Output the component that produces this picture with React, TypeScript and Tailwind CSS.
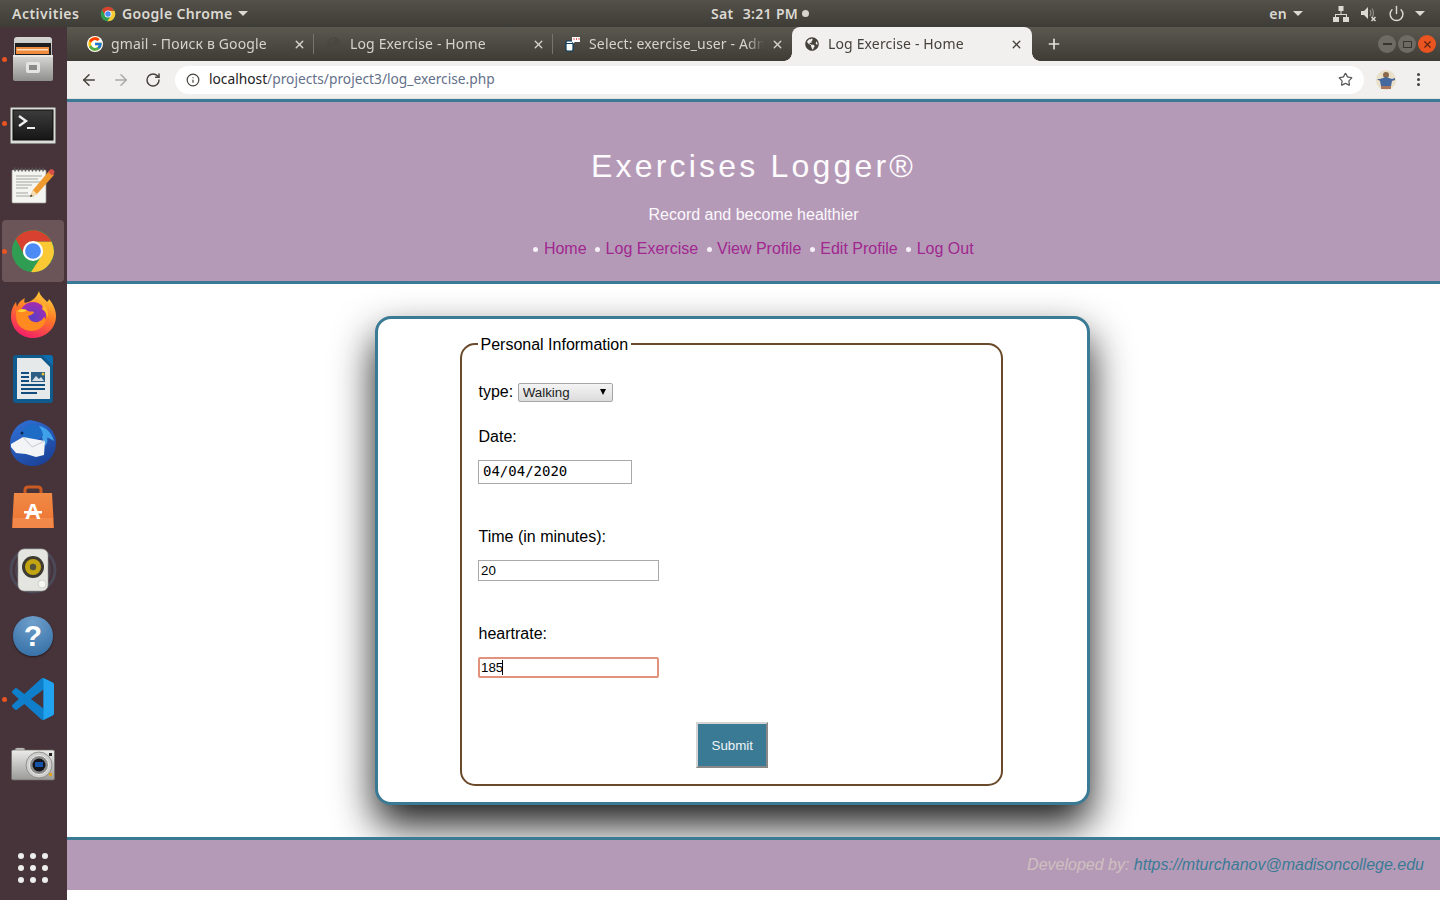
import React from 'react';
import { ArrowLeft, ArrowRight, Info, Plus, Power, RotateCw, Star, X } from 'lucide-react';
import { FcGoogle } from 'react-icons/fc';
import { FaGlobeAmericas } from 'react-icons/fa';

const ChromeLogo = ({ size }: { size: number }) => (
  <svg width={size} height={size} viewBox="0 0 48 48">
    <circle cx="24" cy="24" r="22" fill="#2f9e53" />
    <path d="M24 14H43.2A22 22 0 0 1 22 46L33 29Z" fill="#fbc934" />
    <path d="M43.2 14A22 22 0 0 0 6 11.5L15.2 28.5L24 14Z" fill="#d8412f" />
    <circle cx="24" cy="24" r="10.5" fill="#fff" />
    <circle cx="24" cy="24" r="8.2" fill="#4c8bf5" />
  </svg>
);

const FileCabinet = () => (
  <svg width="44" height="46" viewBox="0 0 44 46">
    <defs>
      <linearGradient id="cab" x1="0" y1="0" x2="0" y2="1">
        <stop offset="0" stopColor="#d6d6d4" />
        <stop offset="1" stopColor="#8f8f8d" />
      </linearGradient>
    </defs>
    <path d="M3 4q0-3 3-3h32q3 0 3 3v38q0 2-2 2H5q-2 0-2-2Z" fill="url(#cab)" />
    <rect x="4" y="7" width="36" height="12" fill="#1f1f1f" />
    <rect x="5" y="11" width="33" height="7" fill="#ef8b3c" />
    <rect x="6" y="13" width="31" height="1.5" fill="#fbe0bf" />
    <path d="M2 20H42V43Q42 45 40 45H4Q2 45 2 43Z" fill="url(#cab)" />
    <rect x="2" y="19" width="40" height="2" fill="#e9e9e7" />
    <rect x="15" y="26" width="14" height="11" rx="2" fill="#e4e4e2" />
    <rect x="18" y="29" width="8" height="5" fill="#8a8a88" />
  </svg>
);

const Terminal = () => (
  <svg className="mt-[4px]" width="46" height="37" viewBox="0 0 46 37">
    <defs>
      <linearGradient id="term" x1="0" y1="0" x2="0" y2="1">
        <stop offset="0" stopColor="#3c3c3c" />
        <stop offset="1" stopColor="#161616" />
      </linearGradient>
    </defs>
    <rect x="0.5" y="0.5" width="45" height="36" rx="1" fill="#dcdcda" stroke="#8a8a88" />
    <rect x="3" y="3" width="40" height="30" fill="url(#term)" stroke="#0d0d0d" />
    <path d="M9 9l7 5-7 5" fill="none" stroke="#eee" strokeWidth="2.4" />
    <rect x="17" y="20" width="8" height="2" fill="#eee" />
  </svg>
);

const TextEditor = () => (
  <svg className="-mt-[4px]" width="46" height="38" viewBox="0 0 46 38">
    <rect x="2" y="4" width="34" height="33" rx="1" fill="#f4f4f0" stroke="#9a9a96" strokeWidth="0.7" />
    <path d="M5 1.5v4M8.5 1.5v4M12 1.5v4M15.5 1.5v4M19 1.5v4M22.5 1.5v4M26 1.5v4M29.5 1.5v4M33 1.5v4" stroke="#555" strokeWidth="1.4" />
    <path d="M6 10h26M6 13h22M6 16h24M6 19h16M6 22h12M6 27h12M6 30h18" stroke="#a5a5a0" strokeWidth="1" />
    <path d="M20 31l3-7L39 5l5 4-17 19Z" fill="#ef9a2e" />
    <path d="M38 6l2-2.5q2-1 4 1 1 2 0 3l-2 2Z" fill="#d8504a" />
    <path d="M20 31l3-7 4 4Z" fill="#f4dcb4" />
    <path d="M20 31l1-2.5 1.5 1.5Z" fill="#222" />
  </svg>
);

const Firefox = () => (
  <svg className="-mt-[3px]" width="46" height="48" viewBox="0 0 46 48">
    <defs>
      <linearGradient id="ff" x1="0.7" y1="0" x2="0.3" y2="1">
        <stop offset="0" stopColor="#ffd23a" />
        <stop offset="0.45" stopColor="#ff7a26" />
        <stop offset="1" stopColor="#f21b6b" />
      </linearGradient>
      <radialGradient id="ffc" cx="0.5" cy="0.6" r="0.6">
        <stop offset="0" stopColor="#5b3fc4" />
        <stop offset="1" stopColor="#a62bb0" />
      </radialGradient>
    </defs>
    <path d="M29 1c1 5 4 6 8 11 1-1 2-2 2-3 5 6 7 12 7 17 0 12-10 22-23 22S1 38 1 26c0-6 2-10 5-14l1 5c1-4 4-7 8-9-1 2-1 4 0 5 4-1 11-3 14-12Z" fill="url(#ff)" />
    <circle cx="23" cy="25" r="13" fill="url(#ffc)" />
    <path d="M6 21c4-3 9-2 12 0 3 1 5 0 6 1-1 3-4 3-6 4 1 4 5 7 10 6 3-1 5-3 6-5 3 2 2 9-7 13-8 3-17-1-20-8-1-4-1-8-1-11Z" fill="#ff8a1f" />
    <path d="M7 21c3-2 6-2 10-1-2 2-5 3-10 1Z" fill="#ffd23a" />
    <path d="M32 12c4 4 7 9 6 16-1-4-3-7-6-9 1-2 1-5 0-7Z" fill="#ffb52e" />
  </svg>
);

const Writer = () => (
  <svg width="40" height="48" viewBox="0 0 40 48">
    <path d="M3 0H29L40 11V45Q40 48 37 48H3Q0 48 0 45V3Q0 0 3 0Z" fill="#0f5b8d" />
    <path d="M29 0H37Q40 0 40 3V11Z" fill="#0a6fb0" />
    <path d="M4 3H28L37 12V44H4Z" fill="#e6e9ea" />
    <path d="M8 18h8M8 22h8M8 26h8M8 30h24M8 34h24M8 38h16" stroke="#134f7e" strokeWidth="2" />
    <rect x="18" y="17" width="14" height="10" fill="#2d5f85" />
    <path d="M19 26l4-5 3 3 2-2 3 4Z" fill="#d9dfe3" />
    <circle cx="30" cy="19" r="1.5" fill="#e8c13c" />
  </svg>
);

const Thunderbird = () => (
  <svg width="48" height="48" viewBox="0 0 48 48">
    <defs>
      <linearGradient id="tb" x1="0.2" y1="0" x2="0.8" y2="1">
        <stop offset="0" stopColor="#2f6fd4" />
        <stop offset="1" stopColor="#1a3f95" />
      </linearGradient>
    </defs>
    <path d="M21 1C9 3 1 13 1 25c0 13 10 22 23 22s23-10 23-23c0-8-4-14-9-17-4-3-11-5-17-6Z" fill="url(#tb)" />
    <path d="M30 7c7 1 13 7 15 15-3-1-5-4-7-3 1 3 0 6-2 8-2-5-4-12-6-20Z" fill="#3fa1e8" />
    <path d="M15 10c3-4 9-6 14-3 3 2 5 6 5 10l-12 8-9-9c-1-2 0-4 2-6Z" fill="#1f6cc6" />
    <path d="M2 25L14 18l22 4-1 14-8 2-10-3-10-1-5-6Z" fill="#f3f4f6" />
    <path d="M14 18l9 10 13-6" fill="none" stroke="#c4c8d0" strokeWidth="1" />
    <circle cx="13" cy="14" r="1.5" fill="#0d2a55" />
  </svg>
);

const SoftwareBag = () => (
  <svg width="44" height="44" viewBox="0 0 44 44">
    <defs>
      <linearGradient id="bag" x1="0" y1="0" x2="0" y2="1">
        <stop offset="0" stopColor="#f08a44" />
        <stop offset="1" stopColor="#ee7332" />
      </linearGradient>
    </defs>
    <path d="M14 10V5q0-3 3-3h10q3 0 3 3v5" fill="none" stroke="#c95a22" strokeWidth="3" />
    <path d="M3 8H41L43 43H1Z" fill="url(#bag)" />
    <rect x="2" y="33" width="40" height="10" fill="#f59a60" opacity="0.5" />
    <text x="22" y="34" textAnchor="middle" fontFamily="Liberation Sans, sans-serif" fontWeight="700" fontSize="22" fill="#fff">A</text>
    <rect x="13" y="26" width="18" height="2.5" fill="#fff" />
  </svg>
);

const Speaker = () => (
  <svg width="50" height="46" viewBox="0 0 50 46">
    <circle cx="25" cy="22" r="22" fill="none" stroke="#54708f" strokeOpacity="0.35" strokeWidth="3" />
    <circle cx="25" cy="22" r="17" fill="none" stroke="#54708f" strokeOpacity="0.3" strokeWidth="2" />
    <rect x="10" y="1" width="30" height="42" rx="6" fill="#e4e5e0" stroke="#9a9a96" strokeWidth="0.6" />
    <circle cx="25" cy="19" r="11" fill="#3d3a30" />
    <circle cx="25" cy="19" r="8" fill="#c2a511" />
    <circle cx="25" cy="19" r="3.2" fill="#55523c" />
    <circle cx="34" cy="36" r="4" fill="#f6f6f3" stroke="#c4c4bf" strokeWidth="0.7" />
  </svg>
);

const HelpIcon = () => (
  <div className="mt-[2px] flex h-[40px] w-[40px] items-center justify-center rounded-full bg-[radial-gradient(circle_at_50%_15%,#6f9fcb,#2f6ba3)] text-[30px] font-bold leading-none text-white shadow-[0_1px_2px_rgba(0,0,0,0.5)] font-['Liberation_Sans',sans-serif]">
    ?
  </div>
);

const VSCode = () => (
  <svg width="42" height="42" viewBox="0 0 24 24">
    <path d="M23.15 2.587L18.21.21a1.494 1.494 0 0 0-1.705.29l-9.46 8.63-4.12-3.128a.999.999 0 0 0-1.276.057L.327 7.261A1 1 0 0 0 .326 8.74L3.899 12 .326 15.26a1 1 0 0 0 .001 1.479L1.65 17.94a.999.999 0 0 0 1.276.057l4.12-3.128 9.46 8.63a1.492 1.492 0 0 0 1.704.29l4.942-2.377A1.5 1.5 0 0 0 24 20.06V3.939a1.5 1.5 0 0 0-.85-1.352zm-5.146 14.861L10.826 12l7.178-5.448v10.896z" fill="#0f7fcc" />
    <path d="M17 .3c.4-.2.9-.3 1.2-.1l4.95 2.39A1.5 1.5 0 0 1 24 3.94v16.12a1.5 1.5 0 0 1-.85 1.35l-4.95 2.38c-.4.2-.9.1-1.2-.1.7.4 1 0 1-.7V1c0-.7-.3-1-1-.7Z" fill="#21a3ef" />
  </svg>
);

const Camera = () => (
  <svg className="mt-[2px]" width="44" height="34" viewBox="0 0 44 34">
    <defs>
      <linearGradient id="cam" x1="0" y1="0" x2="0" y2="1">
        <stop offset="0" stopColor="#ececea" />
        <stop offset="1" stopColor="#9a9a98" />
      </linearGradient>
    </defs>
    <rect x="4" y="1" width="10" height="4" rx="2" fill="#cfcfcd" stroke="#777" strokeWidth="0.5" />
    <rect x="0.5" y="3" width="43" height="30" rx="1.5" fill="url(#cam)" stroke="#6b6b69" strokeWidth="0.7" />
    <circle cx="28" cy="18" r="13" fill="#cfcfcd" stroke="#777" strokeWidth="0.7" />
    <circle cx="28" cy="18" r="9.5" fill="#8a8a88" stroke="#eee" />
    <circle cx="28" cy="18" r="6.5" fill="#14141a" />
    <rect x="24" y="15" width="8" height="5" fill="#1553a8" />
    <rect x="38" y="6" width="3" height="3" fill="#222" />
    <rect x="38" y="26" width="3" height="3" fill="#e0a020" />
  </svg>
);

const DockItem = ({ children, running, active }: { children: React.ReactNode; running?: boolean; active?: boolean }) => (
  <div className="relative flex h-[64px] w-[67px] items-center justify-center pr-[1px]">
    {active && <div className="absolute left-[2px] top-[1px] h-[62px] w-[62px] rounded-[4px] bg-[#6c5558]" />}
    {running && <div className="absolute left-[2px] top-[30px] h-[5px] w-[5px] rounded-full bg-[#e95420]" />}
    <div className="relative">{children}</div>
  </div>
);

const AdminerIcon = () => (
  <svg width="16" height="16" viewBox="0 0 16 16">
    <rect x="1" y="5" width="7" height="10" rx="1.5" fill="#fff" stroke="#0b3f63" strokeWidth="1.2" />
    <path d="M1 7.5h7" stroke="#0b3f63" />
    <path d="M7 1h8v5h-5l-2 1.5V6H7Z" fill="#fff" />
    <path d="M8.5 3h1M11 3h1M13.5 3h1" stroke="#d6312b" strokeWidth="1.5" />
  </svg>
);

const Tab = ({ icon, title, active, sep }: { icon: React.ReactNode; title: string; active?: boolean; sep?: boolean }) => (
  <div className={`relative flex h-[34px] items-center pl-[12px] ${active ? 'w-[240px] rounded-t-[8px] bg-[#f1f0ee] text-[#45423c]' : 'w-[239px] text-[#d6d3cc]'}`}>
    {active && <span className="absolute bottom-0 left-[-8px] h-[8px] w-[8px] bg-[radial-gradient(circle_at_0_0,transparent_7.5px,#f1f0ee_8px)]" />}
    {active && <span className="absolute bottom-0 right-[-8px] h-[8px] w-[8px] bg-[radial-gradient(circle_at_100%_0,transparent_7.5px,#f1f0ee_8px)]" />}
    <span className="flex h-[16px] w-[16px] shrink-0 items-center justify-center">{icon}</span>
    <span className="mb-[2px] ml-[8px] w-[180px] overflow-hidden whitespace-nowrap text-[14px] tracking-[0.15px] [mask-image:linear-gradient(to_right,#000_158px,transparent_175px)]">{title}</span>
    <X size={13} strokeWidth={2.5} className="ml-[2px] shrink-0" />
    {sep && <span className="absolute right-0 top-[7px] h-[20px] w-px bg-[#77746c]" />}
  </div>
);

const NavLink = ({ label }: { label: string }) => (
  <li className="flex items-center">
    <span className="mr-[5.5px] h-[5px] w-[5px] rounded-full bg-[#f5eff6]" />
    <a href="#" className="text-[#a0288f]">{label}</a>
  </li>
);

export default function App() {
  return (
    <div className="flex h-[900px] w-[1440px] flex-col overflow-hidden bg-white font-['Liberation_Sans',sans-serif] text-[16px] text-black">
      {/* ubuntu top bar */}
      <div className="relative flex h-[27px] shrink-0 items-center bg-[linear-gradient(#54514a,#3e3c36)] font-['Noto_Sans',sans-serif] text-[14px] font-semibold tracking-[0.35px] text-[#dcd9d2]">
        <span className="ml-[12px] w-[88px] tracking-[0.5px]">Activities</span>
        <ChromeLogo size={16} />
        <span className="ml-[6px]">Google Chrome</span>
        <span className="ml-[6px] h-0 w-0 border-x-[5px] border-t-[5px] border-x-transparent border-t-[#dcd9d2]" />
        <div className="absolute left-[711px] flex items-center">
          <span>Sat</span>
          <span className="ml-[9px]">3:21 PM</span>
          <span className="ml-[4px] h-[7px] w-[7px] rounded-full bg-[#d8d5ce]" />
        </div>
        <div className="ml-auto flex items-center pr-[15px]">
          <span>en</span>
          <span className="ml-[6px] h-0 w-0 border-x-[5px] border-t-[5px] border-x-transparent border-t-[#dcd9d2]" />
          <svg className="ml-[30px]" width="16" height="16" viewBox="0 0 16 16" fill="#dcd9d2">
            <rect x="5.5" y="0" width="5" height="5" />
            <rect x="0" y="11" width="6" height="5" />
            <rect x="10" y="11" width="6" height="5" />
            <path d="M7.5 5h1v3H14v3h-1V9H3v2H2V8h5.5Z" />
          </svg>
          <svg className="ml-[12px]" width="16" height="16" viewBox="0 0 16 16" fill="#dcd9d2">
            <path d="M0 5h3l4-4v12L3 9H0Z" />
            <path d="M9 4q2 3 0 6M11 2.5q3 4.5 0 9" fill="none" stroke="#8f8c85" strokeWidth="1.2" />
            <path d="M10.5 11l4 4m0-4l-4 4" stroke="#dcd9d2" strokeWidth="1.5" />
          </svg>
          <Power size={17} strokeWidth={2} className="ml-[11px]" />
          <span className="ml-[10px] h-0 w-0 border-x-[5px] border-t-[5px] border-x-transparent border-t-[#dcd9d2]" />
        </div>
      </div>

      <div className="flex min-h-0 flex-1">
        {/* dock */}
        <div className="flex w-[67px] shrink-0 flex-col bg-[#47333a]">
          <DockItem running><FileCabinet /></DockItem>
          <DockItem running><Terminal /></DockItem>
          <DockItem><TextEditor /></DockItem>
          <DockItem running active><ChromeLogo size={46} /></DockItem>
          <DockItem><Firefox /></DockItem>
          <DockItem><Writer /></DockItem>
          <DockItem><Thunderbird /></DockItem>
          <DockItem><SoftwareBag /></DockItem>
          <DockItem><Speaker /></DockItem>
          <DockItem><HelpIcon /></DockItem>
          <DockItem running><VSCode /></DockItem>
          <DockItem><Camera /></DockItem>
          <div className="mb-[17px] ml-[18px] mt-auto grid w-[30px] grid-cols-3 gap-[6px]">
            {Array.from({ length: 9 }).map((_, i) => (
              <span key={i} className="h-[6px] w-[6px] rounded-full bg-[#eeeeec]" />
            ))}
          </div>
        </div>

        {/* chrome window */}
        <div className="flex min-w-0 flex-1 flex-col">
          <div className="flex h-[34px] shrink-0 items-center bg-[linear-gradient(#5b5850,#3f3c36)] pl-[8px] font-['Noto_Sans',sans-serif]">
            <Tab icon={<FcGoogle size={16} className="rounded-full bg-white" />} title="gmail - Поиск в Google" sep />
            <Tab icon={<FaGlobeAmericas size={14} className="text-[#4a4740]" />} title="Log Exercise - Home" sep />
            <Tab icon={<AdminerIcon />} title="Select: exercise_user - Adminer" />
            <Tab icon={<FaGlobeAmericas size={14} className="text-[#45423c]" />} title="Log Exercise - Home" active />
            <Plus size={16} strokeWidth={2.5} className="ml-[14px] text-[#e4e1da]" />
            <div className="ml-auto flex items-center gap-[2px] pr-[4px]">
              <span className="flex h-[18px] w-[18px] items-center justify-center rounded-full bg-[#6e6b64] text-[#38362f]"><span className="h-[2px] w-[9px] bg-[#38362f]" /></span>
              <span className="flex h-[18px] w-[18px] items-center justify-center rounded-full bg-[#6e6b64]"><span className="h-[7px] w-[9px] border border-[#38362f]" /></span>
              <span className="flex h-[18px] w-[18px] items-center justify-center rounded-full bg-[#e95420] text-[#5e2410]"><X size={11} strokeWidth={2.5} /></span>
            </div>
          </div>

          <div className="flex h-[38px] shrink-0 items-center border-b border-[#e2e1df] bg-[#f1f0ee] text-[#45423c]">
            <ArrowLeft size={18} strokeWidth={2} className="ml-[13px]" />
            <ArrowRight size={18} strokeWidth={2} className="ml-[14px] text-[#a9a8a6]" />
            <RotateCw size={16} strokeWidth={2.2} className="ml-[15px]" />
            <div className="ml-[14px] flex h-[28px] w-[1189px] items-center rounded-full bg-white pl-[11px] pr-[11px] font-['Noto_Sans',sans-serif] text-[13.75px]">
              <Info size={14} strokeWidth={2} className="text-[#45423c]" />
              <span className="mb-[1px] ml-[9px] text-[#222]">localhost<span className="text-[#64708a]">/projects/project3/log_exercise.php</span></span>
              <Star size={15} strokeWidth={2} className="ml-auto text-[#5a5a58]" />
            </div>
            <svg className="ml-[12px]" width="20" height="20" viewBox="0 0 20 20">
              <circle cx="10" cy="10" r="10" fill="#eadfc8" />
              <circle cx="10" cy="5" r="3" fill="#8a6a4a" />
              <path d="M4 9l6-2 6 2 3-1v2l-3 1-1 5H5L4 11 1 9Z" fill="#45699e" />
              <path d="M5 16h10v3H5Z" fill="#a8765a" />
            </svg>
            <div className="ml-[21px] flex flex-col gap-[2px]">
              <span className="h-[3px] w-[3px] rounded-full bg-[#45423c]" />
              <span className="h-[3px] w-[3px] rounded-full bg-[#45423c]" />
              <span className="h-[3px] w-[3px] rounded-full bg-[#45423c]" />
            </div>
          </div>

          {/* page */}
          <div className="flex h-[185px] shrink-0 flex-col items-center border-y-[3px] border-[#3b7a94] bg-[#b59ab8]">
            <h1 className="mt-[46px] text-[32px] leading-[37px] tracking-[3.2px] text-[#fdfbfd]">Exercises Logger®</h1>
            <p className="mt-[21px] leading-[18px] text-[#fbf8fc]">Record and become healthier</p>
            <ul className="mt-[16px] flex gap-[8.5px] leading-[18px]">
              <NavLink label="Home" />
              <NavLink label="Log Exercise" />
              <NavLink label="View Profile" />
              <NavLink label="Edit Profile" />
              <NavLink label="Log Out" />
            </ul>
          </div>

          <div className="my-[32px] ml-[307.5px] h-[489px] w-[715px] shrink-0 rounded-[16px] border-[3px] border-[#3b7a94] bg-white pb-[16px] pl-[82.5px] pr-[84px] pt-[15px] shadow-[0_20px_40px_0_rgba(0,0,0,0.9)]">
            <fieldset className="h-[452px] rounded-[15px] border-2 border-[#6b4a2b] px-[16px]">
              <legend className="px-[2.5px] pt-[2px] leading-[18px]">Personal Information</legend>
              <div className="mt-[29px] flex items-start pl-[0.5px] leading-[18px]">
                <label>type:</label>
                <div className="relative ml-[5px] h-[19px] w-[95px]">
                  <select defaultValue="Walking" className="block h-full w-full appearance-none rounded-[2px] border border-[#a6a6a6] bg-[linear-gradient(#f4f4f4,#dcdcdc)] pl-[3.5px] text-[13.333px] leading-[15px] text-[#222]">
                    <option>Walking</option>
                    <option>Running</option>
                    <option>Cycling</option>
                  </select>
                  <span className="pointer-events-none absolute right-[7px] top-[6px] h-0 w-0 border-x-[3.5px] border-t-[6px] border-x-transparent border-t-black" />
                </div>
              </div>
              <label className="mt-[26px] block pl-[0.5px] leading-[18px]">Date:</label>
              <input defaultValue="04/04/2020" className="mt-[14px] block h-[24px] w-[154px] border border-[#a9a9a9] pb-[3px] pl-[4px] font-['DejaVu_Sans_Mono',monospace] text-[14px]" />
              <label className="mt-[44px] block pl-[0.5px] leading-[18px]">Time (in minutes):</label>
              <input defaultValue="20" className="mt-[14px] block h-[21px] w-[181px] border border-[#a9a9a9] pl-[2px] text-[13.333px]" />
              <label className="mt-[44px] block pl-[0.5px] leading-[18px]">heartrate:</label>
              <div className="relative mt-[14px] h-[21px] w-[181px]">
                <input defaultValue="185" className="block h-full w-full rounded-[2px] border-2 border-[#e2917a] pl-[1px] text-[13.333px]" />
                <span className="absolute left-[24px] top-[3px] h-[15px] w-px bg-black" />
              </div>
              <div className="mt-[44px] flex justify-center pl-[2px]">
                <button type="button" className="h-[46px] w-[72px] border-2 border-b-[#888] border-l-[#d4d4d4] border-r-[#888] border-t-[#d4d4d4] bg-[#3b7a94] pt-[2px] text-[13.333px] text-[#eef4f7]">Submit</button>
              </div>
            </fieldset>
          </div>

          <div className="relative z-10 flex h-[53px] shrink-0 items-center justify-end border-t-[3px] border-[#3b7a94] bg-[#b59ab8] pr-[16px] italic">
            <span className="text-[#cfc0bf]">Developed by:&nbsp;</span>
            <a href="#" className="text-[#3b7a94]">https://mturchanov@madisoncollege.edu</a>
          </div>
          <div className="relative z-10 flex-1 bg-white" />
        </div>
      </div>
    </div>
  );
}
